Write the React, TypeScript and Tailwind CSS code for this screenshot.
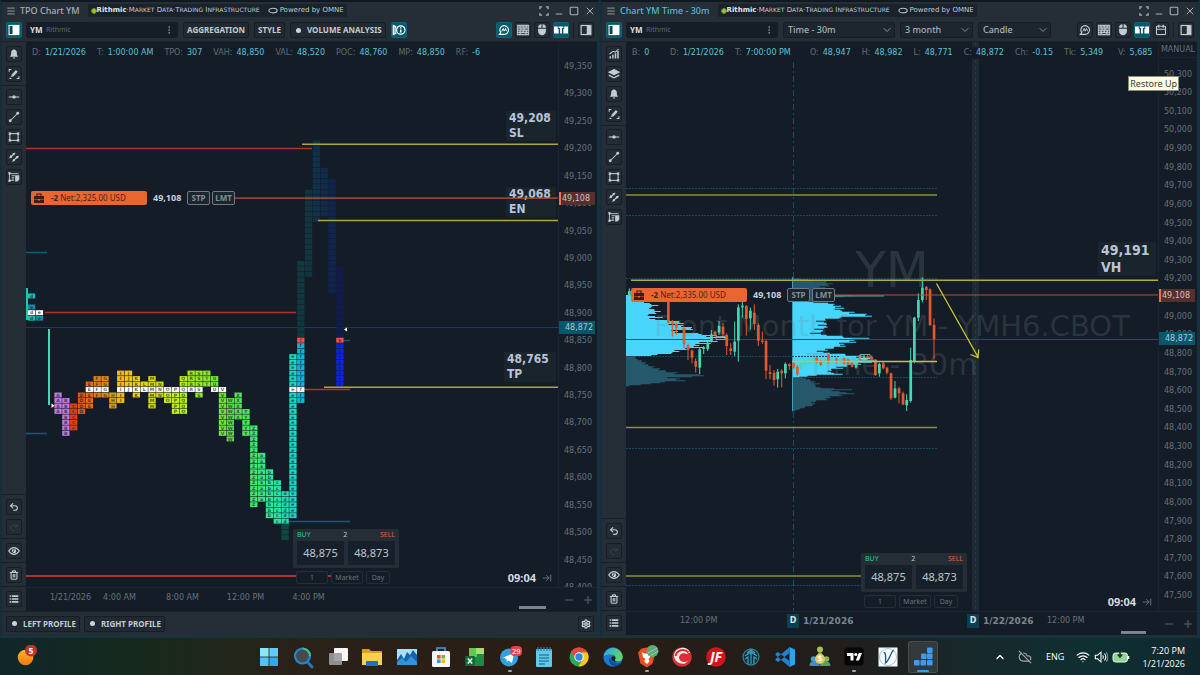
import React from "react";
import {
  ArrowRightToLine,
  ChevronDown,
  ChevronUp,
  CloudOff,
  List,
  Menu,
  Minus,
  MoreVertical,
  Plus,
  Redo2,
  Settings,
  Square,
  Trash2,
  Undo2,
  Wifi,
  X,
} from "lucide-react";

const SERIES_FONT = "font-['DejaVu_Sans',sans-serif]";

/* ---------- small icons ---------- */

type IconProps = { children: React.ReactNode; size?: string };

function Glyph({ children, size = "size-3" }: IconProps) {
  return (
    <svg viewBox="0 0 16 16" className={size} fill="none" stroke="currentColor" strokeWidth="1.4" aria-hidden="true">
      {children}
    </svg>
  );
}

const BellIcon = () => (
  <Glyph>
    <path d="M8 2c2.4 0 3.8 1.8 3.8 4.3 0 3 .6 4 1.7 5.2h-11c1.100-1.200 1.700-2.200 1.700-5.200C4.200 3.800 5.600 2 8 2z" fill="currentColor" stroke="none" />
    <path d="M6.300 12.500h3.400L8 14.500z" fill="currentColor" stroke="none" />
  </Glyph>
);
const PenIcon = () => (
  <Glyph>
    <path d="M4 12l1-3.500 5.500-6 2.500 2.500-5.500 6z" fill="currentColor" stroke="none" />
    <path d="M1.500 5V2h3M14.500 11v3h-3M2 13.800h2.500" />
  </Glyph>
);
const HLineIcon = () => (
  <Glyph>
    <path d="M1 8h14" />
    <circle cx="8" cy="8" r="2.300" fill="currentColor" stroke="none" />
  </Glyph>
);
const TrendIcon = () => (
  <Glyph>
    <path d="M3 13L13 3" />
    <circle cx="3" cy="13" r="1.900" fill="currentColor" stroke="none" />
    <circle cx="13" cy="3" r="1.900" fill="currentColor" stroke="none" />
  </Glyph>
);
const RectIcon = () => (
  <Glyph>
    <rect x="2.500" y="3.500" width="11" height="9" />
    {[[2.5, 3.5], [13.5, 3.5], [2.5, 12.5], [13.5, 12.5]].map(([x, y]) => (
      <rect key={`${x}-${y}`} x={x - 1.6} y={y - 1.6} width="3.200" height="3.200" fill="currentColor" stroke="none" />
    ))}
  </Glyph>
);
const ChannelIcon = () => (
  <Glyph>
    <path d="M2 9.500L9.500 2.500M6 14l8-7.500" strokeWidth="1.400" />
    <circle cx="4" cy="7.500" r="1.700" fill="currentColor" stroke="none" />
    <circle cx="7.500" cy="4.300" r="1.500" fill="currentColor" stroke="none" />
    <circle cx="12" cy="8.400" r="1.700" fill="currentColor" stroke="none" />
    <circle cx="8" cy="12" r="1.500" fill="currentColor" stroke="none" />
  </Glyph>
);
const NoteIcon = () => (
  <Glyph>
    <path d="M2 2v12M2 3.500h12M2 12.500h6" strokeWidth="1.200" />
    <rect x="0.500" y="1.500" width="3" height="3" fill="currentColor" stroke="none" />
    <rect x="0.500" y="11.500" width="3" height="3" fill="currentColor" stroke="none" />
    <path d="M5 6.200h4M5 8.400h3M5 10.500h3" strokeWidth="1.200" />
    <path d="M9.500 5.500h5.500v6l-2.500 2.500h-3z" fill="currentColor" stroke="none" />
  </Glyph>
);
const BarsIcon = () => (
  <Glyph>
    <path d="M3 14v-3M6.500 14V9M10 14V7M13.300 14V4" strokeWidth="2" />
    <path d="M2 8l5-3.500 3 1L14 1.500" />
  </Glyph>
);
const LayersIcon = () => (
  <Glyph>
    <path d="M8 2l7 3.500L8 9 1 5.500z" fill="currentColor" />
    <path d="M1 9.500L8 13l7-3.500" strokeWidth="1.800" />
  </Glyph>
);
const EyeIcon = () => (
  <Glyph>
    <path d="M1 8q3-4.500 7-4.500T15 8q-3 4.500-7 4.500T1 8z" strokeWidth="1.500" />
    <circle cx="8" cy="8" r="3" fill="currentColor" stroke="none" />
    <path d="M8 8V4.500M8 8l-2.500 2" stroke="#232b34" strokeWidth="1" />
  </Glyph>
);
const PanelLeftIcon = () => (
  <Glyph>
    <rect x="1.500" y="2" width="13" height="12" strokeWidth="1.600" />
    <rect x="6" y="2" width="8.500" height="12" fill="currentColor" stroke="none" />
    <rect x="2.300" y="2.800" width="3.200" height="10.400" fill="#064b5c" stroke="none" />
  </Glyph>
);
const PanelRightIcon = () => (
  <Glyph>
    <rect x="1.500" y="2" width="13" height="12" strokeWidth="1.600" />
    <rect x="9" y="2" width="5.500" height="12" fill="currentColor" stroke="none" />
  </Glyph>
);
const ChatIcon = () => (
  <Glyph>
    <path d="M3.600 11.500A5.800 5.800 0 1 1 8 13.800H1.800z" strokeWidth="1.500" />
    <path d="M4.800 10l2.200-4 1.200 3.500L10 6l1.400 3.500" strokeWidth="1.300" />
  </Glyph>
);
const KeyboardIcon = () => (
  <svg viewBox="0 0 16 16" className="size-3.5" fill="none" aria-hidden="true">
    <rect x="1" y="2" width="14" height="12" fill="#b8c0c8" />
    <path d="M2 4.500h2m1.500 0h2m1.500 0h2m1.500 0h1.500M2 7h3m1.500 0h2m1.500 0h4M2 9.500h2m1.500 0h2m1.500 0h2m1.500 0h1.500M2 12h2m1.500 0h5m1.500 0h2" stroke="#333c46" strokeWidth="1" />
  </svg>
);
const MouseIcon = () => (
  <Glyph size="size-3.5">
    <path d="M3.500 6.500h9V9a4.500 5 0 0 1-9 0z" fill="currentColor" stroke="none" />
    <path d="M3.500 5.500A4 4 0 0 1 7.400 1.500v4zM8.600 1.500a4 4 0 0 1 3.900 4H8.600z" fill="currentColor" stroke="none" />
  </Glyph>
);
const LinkBarIcon = () => (
  <svg viewBox="0 0 16 16" className="size-3.5" aria-hidden="true">
    <path d="M0 4h4.300v2.800h1V12H0zM11.700 4H16v8h-5.300V6.800h1z" fill="#fff" />
    <path d="M5.300 4h5.400v1.800H9V12H7V5.800H5.300z" fill="#fff" />
  </svg>
);
const CalendarIcon = () => (
  <Glyph>
    <rect x="2" y="3" width="12" height="11" rx="1" />
    <path d="M2 7h12M5 1v4M11 1v4" strokeWidth="1.600" />
  </Glyph>
);
const FlagInfoIcon = () => (
  <Glyph size="size-3.5">
    <path d="M1.500 2v12M2 3l3 1.500M2 13l3-1.500M3.500 4v8" />
    <circle cx="10" cy="8" r="4.800" />
    <path d="M10 7.300v3.500M10 4.800v1.400" strokeWidth="1.700" />
  </Glyph>
);
const ExpandIcon = () => (
  <Glyph size="size-2.5">
    <path d="M1.500 5V1.500H5M11 1.500h3.500V5M14.500 11v3.500H11M5 14.500H1.500V11" strokeWidth="2" />
  </Glyph>
);

/* ---------- controls ---------- */

function IconButton({ label, active, dim, children }: { label: string; active?: boolean; dim?: boolean; children: React.ReactNode }) {
  return (
    <button
      type="button"
      aria-label={label}
      className={`flex size-4 shrink-0 items-center justify-center rounded-[2px] border ${
        active ? "border-[#0b6678] bg-[#07596b] text-white" : "border-[#161d25] bg-[#232b34]"
      } ${dim ? "text-[#3b444e]" : active ? "" : "text-[#c3cbd3]"}`}
    >
      {children}
    </button>
  );
}

function TextButton({ children, dot }: { children: string; dot?: boolean }) {
  return (
    <button
      type="button"
      className="flex h-4 shrink-0 items-center whitespace-nowrap rounded-[2px] border border-[#161d25] bg-[#212932] px-[3px] text-[8px] font-bold text-[#c3cbd3]"
    >
      {dot && <span className="mr-1.5 ml-0.5 size-[5px] rounded-full bg-[#cdd5dc]" />}
      {children}
    </button>
  );
}

function Picker({ label, value, width }: { label: string; value: string; width: string }) {
  return (
    <div className={`relative flex h-4 ${width}`}>
      <select
        aria-label={label}
        defaultValue={value}
        className="block h-4 w-full appearance-none rounded-[2px] border border-[#161d25] bg-[#1d252e] px-1 py-0 text-[9px] leading-[14px] font-medium text-[#aab3bb]"
      >
        <option>{value}</option>
      </select>
      <ChevronDown className="pointer-events-none absolute top-0.5 right-0.5 size-3 text-[#8b949d]" />
    </div>
  );
}

const Divider = () => <span className="mt-[3px] mb-1 block h-px w-full bg-[#171e26]" />;

function TitleBar({ title, active }: { title: string; active?: boolean }) {
  return (
    <header className="flex h-[17px] items-center bg-[#252d37] pr-px pl-1 text-[#a6afb8]">
      <button type="button" aria-label="Window menu"><Menu className="size-2.5" /></button>
      <h2 className={`ml-1 text-[9px] font-medium whitespace-nowrap ${active ? "text-[#55bcd2]" : "text-[#a6afb8]"}`}>{title}</h2>
      <div className={`ml-2 flex h-[13px] items-center whitespace-nowrap rounded-[2px] bg-[#1a222b] px-[3px] text-[7px] text-[#c3cad1] ${SERIES_FONT}`}>
        <svg viewBox="0 0 8 8" className="size-[6px]" aria-hidden="true">
          <rect x="1" y="1" width="6" height="6" fill="#6b9c16" />
          <path d="M4 0v8M0 4h8" stroke="#b7dc3a" strokeWidth="1.200" />
        </svg>
        <span className="font-bold text-[#e1e6ea]">Rithmic</span>
        <span>·M<span className="text-[6px]">ARKET</span> D<span className="text-[6px]">ATA</span>·T<span className="text-[6px]">RADING</span> I<span className="text-[6px]">NFRASTRUCTURE</span></span>
        <svg viewBox="0 0 12 8" className="ml-2 h-[7px] w-[10px]" fill="none" stroke="#b9c1c9" strokeWidth="1.300" aria-hidden="true">
          <ellipse cx="6" cy="4" rx="5" ry="2.800" />
        </svg>
        <span className="ml-0.5">Powered by OMNE</span>
      </div>
      <div className="ml-auto flex items-center gap-[5px]">
        <button type="button" aria-label="Full screen"><ExpandIcon /></button>
        <button type="button" aria-label="Minimize" className="pt-1.5"><Minus className="size-2.5" strokeWidth={2.6} /></button>
        <button type="button" aria-label="Maximize"><Square className="size-2.5" strokeWidth={2.6} /></button>
        <button type="button" aria-label="Close"><X className="size-3" /></button>
      </div>
    </header>
  );
}

function SymbolBox() {
  return (
    <div className="ml-1 flex h-4 w-[152px] shrink-0 items-center rounded-[2px] bg-[#151d26] px-1">
      <input aria-label="Symbol" defaultValue="YM" className="h-3 w-4 bg-transparent text-[8px] leading-[12px] font-bold text-[#dce2e7] outline-none" />
      <span className="text-[7px] leading-[12px] text-[#5e6973]">Rithmic</span>
      <button type="button" aria-label="Symbol options" className="ml-auto text-[#8b949d]"><MoreVertical className="size-2.5" /></button>
    </div>
  );
}

function ToolbarRight({ calendar, chatActive }: { calendar?: boolean; chatActive?: boolean }) {
  return (
    <div className="ml-auto flex items-center gap-[3px]">
      <IconButton label="Data window" active={chatActive}><ChatIcon /></IconButton>
      <IconButton label="Keyboard trading"><KeyboardIcon /></IconButton>
      <IconButton label="Mouse trading"><MouseIcon /></IconButton>
      <IconButton label="Trading bar" active><LinkBarIcon /></IconButton>
      {calendar && <IconButton label="Sessions"><CalendarIcon /></IconButton>}
      <span className="mx-px h-4 w-px bg-[#171e26]" />
      <IconButton label="Right panel"><PanelRightIcon /></IconButton>
    </div>
  );
}

function DrawingTools({ extended }: { extended?: boolean }) {
  return (
    <nav aria-label="Drawing tools" className="flex w-6 shrink-0 flex-col items-center bg-[#252d36] pt-1 pb-1">
      <div className="flex flex-col gap-1">
        {extended && (
          <>
            <IconButton label="Indicators"><BarsIcon /></IconButton>
            <IconButton label="Overlays"><LayersIcon /></IconButton>
          </>
        )}
        <IconButton label="Alerts"><BellIcon /></IconButton>
        <IconButton label="Draw"><PenIcon /></IconButton>
      </div>
      <span className="my-[3px] block h-px w-full bg-[#171e26]" />
      <div className="flex flex-col gap-1">
        <IconButton label="Horizontal line"><HLineIcon /></IconButton>
        <IconButton label="Trend line"><TrendIcon /></IconButton>
        <IconButton label="Rectangle"><RectIcon /></IconButton>
        <IconButton label="Channel"><ChannelIcon /></IconButton>
        <IconButton label="Note"><NoteIcon /></IconButton>
      </div>
      <div className="mt-auto w-full"><Divider /></div>
      <div className="flex flex-col gap-1">
        <IconButton label="Undo"><Undo2 className="size-2.5" strokeWidth={2.6} /></IconButton>
        <IconButton label="Redo" dim><Redo2 className="size-2.5" /></IconButton>
      </div>
      <Divider />
      <IconButton label="Show drawings"><EyeIcon /></IconButton>
      <Divider />
      <IconButton label="Delete drawings"><Trash2 className="size-2.5" strokeWidth={2.6} /></IconButton>
      <Divider />
      <IconButton label="Object list"><List className="size-2.5" strokeWidth={4} /></IconButton>
    </nav>
  );
}

/* ---------- chart overlays ---------- */

type Stat = { k: string; v: string; w?: string };

function StatRow({ stats }: { stats: Stat[] }) {
  return (
    <dl className={`absolute top-[5px] left-1.5 flex gap-[11px] whitespace-nowrap bg-[#141d27] text-[8px] leading-[12px] ${SERIES_FONT}`}>
      {stats.map((s) => (
        <div key={s.k} className={`flex gap-1 ${s.w ?? ""}`}>
          <dt className="text-[#626c76]">{s.k}:</dt>
          <dd className="text-[#5bc0d6]">{s.v}</dd>
        </div>
      ))}
    </dl>
  );
}

function PositionTag({ net, className }: { net: string; className: string }) {
  return (
    <div className={`absolute left-[5px] flex h-[14px] items-center ${className}`}>
      <div className="flex h-[14px] w-[116px] items-center rounded-[2px] bg-[#ea6631] px-0.5 text-[8px] whitespace-nowrap text-[#4a2417]">
        <svg viewBox="0 0 12 12" className="mr-1.5 size-3" aria-hidden="true">
          <path d="M4 4V2h4v2" fill="none" stroke="#3a1d14" strokeWidth="1.200" />
          <path d="M1 4h10v3H1zM1 7.600h4v1h2v-1h4V11H1z" fill="#3a1d14" />
        </svg>
        <b>-2</b>&nbsp;<span>Net:{net} USD</span>
      </div>
      <span className="w-[40px] bg-[#141d27] pl-1.5 text-[9px] leading-[14px] font-bold text-[#c6cfdb]">49,108</span>
      {["STP", "LMT"].map((t) => (
        <button key={t} type="button" className="mr-0.5 h-[14px] w-[23px] rounded-[2px] border border-[#707a84] bg-[#1c252e] text-center text-[8px] leading-[12px] font-bold text-[#848d96]">
          {t}
        </button>
      ))}
    </div>
  );
}

function OrderPanel({ className }: { className: string }) {
  return (
    <div className={`absolute ${className}`}>
      <div className="w-[106px] rounded-[2px] bg-[#252d36] px-1 pt-px pb-[3px]">
        <div className="flex justify-between text-[7px] leading-[10px]">
          <span className="text-[#2fc7a1]">BUY</span>
          <span className="text-[#c3cbd3]">2</span>
          <span className="text-[#e0603a]">SELL</span>
        </div>
        <div className="mt-px flex gap-1">
          <button type="button" className="h-6 flex-1 bg-[#17202a] text-[11px] leading-[22px] text-[#bcc5d0]">48,875</button>
          <button type="button" className="h-6 flex-1 bg-[#17202a] text-[11px] leading-[22px] text-[#bcc5d0]">48,873</button>
        </div>
      </div>
      <div className="mt-[3px] flex gap-[3px] pl-[3px] text-[7px] text-[#69737d]">
        <button type="button" className="h-[13px] w-8 rounded-[2px] border border-[#242d37] bg-[#141d27] leading-[11px]">1</button>
        <button type="button" className="h-[13px] w-8 rounded-[2px] border border-[#242d37] bg-[#141d27] leading-[11px]">Market</button>
        <button type="button" className="h-[13px] w-6 rounded-[2px] border border-[#242d37] bg-[#141d27] leading-[11px]">Day</button>
      </div>
    </div>
  );
}

const Countdown = () => (
  <div className="absolute right-1.5 bottom-0.5 flex items-center gap-1.5 text-[11px] leading-[14px] font-bold text-[#d3dae0]">
    09:04 <ArrowRightToLine className="size-2.5 text-[#737d87]" />
  </div>
);

function LevelTag({ price, name, className }: { price: string; name: string; className: string }) {
  return (
    <div className={`absolute right-0.5 bg-[#1a242d] pr-1 pl-[3px] font-['DejaVu_Sans_Condensed','DejaVu_Sans',sans-serif] font-bold text-[#b9c5d6] ${className}`}>
      <div>{price}</div>
      <div>{name}</div>
    </div>
  );
}

type Scale = (price: number) => number;

function PriceAxis({ from, to, step, scale, manual }: { from: number; to: number; step: number; scale: Scale; manual?: boolean }) {
  const ticks: number[] = [];
  for (let p = from; p >= to; p -= step) ticks.push(p);
  return (
    <div className={`relative w-[39px] shrink-0 overflow-hidden border-l border-[#1b242e] ${SERIES_FONT}`}>
      <svg className="absolute inset-0 size-full" aria-label="Price axis">
        <g transform="translate(0,-42)">
          {ticks.map((p) => (
            <text key={p} x="19" y={Math.round(scale(p)) + 3} textAnchor="middle" fontSize="8" fill="#67717b">
              {p.toLocaleString("en-US")}
            </text>
          ))}
        </g>
      </svg>
      {manual && (
        <button type="button" className="absolute inset-x-0 top-0 h-4 border-b border-[#1b242e] text-[8px] text-[#67717b]">MANUAL</button>
      )}
      <span
        className="absolute right-0.5 left-0 h-[13px] border-l-2 border-[#ee7048] bg-[#57302d] pl-px text-[8px] leading-[13px] text-[#c9c3c4]"
        style={{ top: Math.round(scale(49108)) - 49 }}
      >
        49,108
      </span>
      <span
        className="absolute right-0.5 left-0 h-[13px] bg-[#07576a] pl-1.5 text-[8px] leading-[13px] text-[#a9c9d6]"
        style={{ top: Math.round(scale(48872)) - 49 }}
      >
        48,872
      </span>
    </div>
  );
}

const ZoomControls = () => (
  <div className="flex w-[39px] shrink-0 items-center justify-around pl-0.5 text-[#59636d]">
    <button type="button" aria-label="Zoom out"><Minus className="size-3" strokeWidth={2} /></button>
    <button type="button" aria-label="Zoom in"><Plus className="size-3" strokeWidth={2} /></button>
  </div>
);

/* ---------- TPO profile ---------- */

const tpoScale: Scale = (p) => 66 + (49350 - p) * 0.5484;
const ROW = 5.484;

type Column = { l: string; top: number; bottom: number; c: string; dark?: [number, number, string] };

const COLUMNS: Column[] = [
  { l: "A", top: -1, bottom: -4, c: "#c07ae0" },
  { l: "B", top: -2, bottom: -8, c: "#b87ae4" },
  { l: "C", top: -3, bottom: -7, c: "#e23f12" },
  { l: "D", top: -1, bottom: -4, c: "#e5561a" },
  { l: "E", top: 1, bottom: -3, c: "#e26a1a" },
  { l: "F", top: 2, bottom: -1, c: "#e37d18" },
  { l: "G", top: 2, bottom: -1, c: "#e58a18" },
  { l: "H", top: -1, bottom: -3, c: "#e8a01a" },
  { l: "I", top: 3, bottom: -2, c: "#efb91a" },
  { l: "J", top: 3, bottom: 0, c: "#efc61a" },
  { l: "K", top: 2, bottom: -1, c: "#ecce1c" },
  { l: "L", top: 1, bottom: 0, c: "#e6d81c" },
  { l: "M", top: 2, bottom: -3, c: "#dfe01c" },
  { l: "N", top: 1, bottom: -1, c: "#d4e41c" },
  { l: "O", top: 0, bottom: -2, c: "#cdf01c" },
  { l: "P", top: 0, bottom: -4, c: "#c4f01c" },
  { l: "Q", top: 2, bottom: -4, c: "#bcf21e" },
  { l: "R", top: 3, bottom: 0, c: "#a8ec22" },
  { l: "S", top: 3, bottom: -1, c: "#98e826" },
  { l: "T", top: 3, bottom: 1, c: "#8ce62c" },
  { l: "U", top: 2, bottom: 0, c: "#7ce634" },
  { l: "V", top: 0, bottom: -8, c: "#6ee63a" },
  { l: "W", top: -2, bottom: -9, c: "#60e444" },
  { l: "X", top: -1, bottom: -5, c: "#56e650" },
  { l: "Y", top: -4, bottom: -8, c: "#4ce85c" },
  { l: "Z", top: -7, bottom: -21, c: "#42ea6c" },
  { l: "a", top: -12, bottom: -20, c: "#36e87c" },
  { l: "b", top: -15, bottom: -23, c: "#2eea92" },
  { l: "c", top: -17, bottom: -24, c: "#26e8a2" },
  { l: "d", top: -19, bottom: -24, c: "#20e4b2", dark: [-25, -27, "#114640"] },
  { l: "e", top: 6, bottom: -23, c: "#1bd8c4" },
  { l: "f", top: 9, bottom: -2, c: "#14b4d4", dark: [23, 10, "#12383f"] },
  { l: "g", top: 0, bottom: 1, c: "", dark: [36, 21, "#12343f"] },
  { l: "h", top: 0, bottom: 1, c: "", dark: [45, 31, "#11304a"] },
  { l: "i", top: 0, bottom: 1, c: "", dark: [40, 32, "#112c4a"] },
  { l: "j", top: 0, bottom: 1, c: "", dark: [38, 18, "#11244c"] },
  { l: "k", top: 9, bottom: 1, c: "#0c22ee", dark: [22, 10, "#121c4c"] },
];

function Cell({ x, y, fill, letter }: { x: number; y: number; fill: string; letter?: string }) {
  return (
    <g>
      <rect x={x - 3.6} y={y - 2.5} width="7.300" height="4.900" fill={fill} />
      {letter && (
        <text x={x} y={y + 1.7} textAnchor="middle" fontSize="4.500" fontWeight="bold" fill="#10202a" opacity="0.700">
          {letter}
        </text>
      )}
    </g>
  );
}

function TpoColumns() {
  const poc = tpoScale(48760);
  return (
    <>
      {COLUMNS.map((col, i) => {
        const x = 58 + i * 7.83;
        const cells: React.ReactNode[] = [];
        for (let r = col.top; r >= col.bottom; r--) {
          const fill = r === 0 ? "#ffffff" : r === 9 ? "#f0554f" : col.c;
          cells.push(<Cell key={r} x={x} y={poc - r * ROW} fill={fill} letter={col.l} />);
        }
        if (col.dark) {
          for (let r = col.dark[0]; r >= col.dark[1]; r--) cells.push(<Cell key={`d${r}`} x={x} y={poc - r * ROW} fill={col.dark[2]} />);
        }
        return <g key={col.l}>{cells}</g>;
      })}
    </>
  );
}

const FAR = 4000;

function TpoChart() {
  return (
    <svg className="absolute inset-0 size-full" aria-label="TPO profile">
      <g transform="translate(-26,-42)" className={SERIES_FONT}>
        <path d={`M26 327.500H${FAR}`} stroke="#0c4656" />
        <path d="M26 148.500H312M45 312.500H296M303 389.500H350" stroke="#b3302b" strokeWidth="1.400" />
        <path d="M26 576H332" stroke="#b3302b" strokeWidth="1.800" />
        <path d="M26 252.500H47M26 433.500H47M288 521.500H350M344 340.500H350" stroke="#0d5e70" strokeWidth="1.300" />
        <path d="M27 288v32" stroke="#18c9b5" strokeWidth="2" />
        <Cell x={31.500} y={296} fill="#12c6b2" letter="d" />
        <Cell x={31.500} y={307} fill="#128fa0" letter="e" />
        <Cell x={31.500} y={312.700} fill="#ffffff" letter="d" />
        <Cell x={39.400} y={312.700} fill="#ffffff" letter="e" />
        <Cell x={31.500} y={318.200} fill="#12c6b2" letter="d" />
        <Cell x={39.400} y={318.200} fill="#128fa0" letter="e" />
        <path d="M49 329v76" stroke="#3fdcb8" strokeWidth="2" />
        <TpoColumns />
        <path d="M51.500 403.500l3 2.200-3 2.200z" fill="#fff" />
        <path d="M344 329.500l3-2v4z" fill="#fff" />
        <path d={`M302 144.200H${FAR}M318 220.500H${FAR}M324 387.200H${FAR}`} stroke="#aea63a" strokeWidth="1.400" />
        <path d={`M234 198.200H${FAR}`} stroke="#bf5038" strokeWidth="1.200" />
      </g>
    </svg>
  );
}

/* ---------- time chart ---------- */

const timeScale: Scale = (p) => 73.5 + (50300 - p) * 0.18625;

/* [y, length] samples, three units per pixel */
type Sample = [number, number];

const LEFT_VALUE: Sample[] = [[225, 17], [240, 37], [247, 67], [257, 102], [260, 72], [268, 90], [275, 107], [285, 67], [290, 117], [296, 67], [300, 152], [307, 182], [312, 152], [318, 192], [325, 220], [330, 162], [335, 152], [340, 242], [345, 267], [350, 300], [356, 302], [362, 272], [370, 252], [376, 222], [382, 232], [388, 172], [395, 162], [402, 112], [407, 52]];
const LEFT_TAIL: Sample[] = [[409, 30], [415, 32], [425, 57], [435, 72], [445, 102], [455, 137], [460, 172], [466, 272], [472, 137], [480, 192], [485, 122], [490, 82], [495, 17], [498, 2]];
const RIGHT_HEAD: Sample[] = [[172, 4], [180, 64], [186, 121], [195, 124], [200, 84], [206, 124], [212, 114], [220, 124], [228, 204], [233, 100], [243, 70]];
const RIGHT_VALUE: Sample[] = [[245, 64], [247, 124], [255, 139], [262, 159], [268, 144], [275, 184], [281, 224], [286, 275], [290, 164], [295, 124], [302, 84], [308, 114], [315, 89], [320, 124], [326, 74], [332, 109], [338, 64], [345, 124], [350, 184], [353, 232], [358, 194], [365, 189], [370, 154], [376, 174], [382, 124], [388, 114], [393, 79], [400, 144], [405, 204], [410, 224], [415, 254], [420, 249], [425, 239], [430, 224], [436, 164], [443, 154], [448, 124], [455, 114], [460, 174], [465, 64], [470, 24]];
const RIGHT_TAIL: Sample[] = [[472, 30], [475, 49], [482, 64], [490, 84], [497, 74], [502, 84], [507, 194], [512, 124], [518, 194], [524, 164], [530, 124], [538, 104], [545, 64], [552, 74], [560, 44], [568, 19], [574, 2]];

/* alternate rows are shortened a little so the profile reads as separate price bars */
const ROW_FACTOR = [1, 0.86, 0.97, 0.9, 1.02, 0.84];

function profilePath(samples: Sample[], x: number): string {
  const first = samples[0][0];
  const last = samples[samples.length - 1][0];
  let d = `M${x} ${220 + first / 3}`;
  let n = 0;
  for (let y = first; y <= last; y += 3) {
    let k = 0;
    while (k < samples.length - 2 && samples[k + 1][0] < y) k++;
    const [y0, w0] = samples[k];
    const [y1, w1] = samples[k + 1];
    const t = Math.min(1, Math.max(0, (y - y0) / (y1 - y0)));
    const w = ((w0 + (w1 - w0) * t) / 3) * ROW_FACTOR[n++ % ROW_FACTOR.length];
    d += `H${(x + w).toFixed(1)}V${(220 + (y + 3) / 3).toFixed(1)}`;
  }
  return `${d}H${x}z`;
}

/* [x, body top, body bottom, wick top, wick bottom, rising] */
type Candle = [number, number, number, number, number, 0 | 1];

const CANDLES: Candle[] = [
  [88, 213, 230, 205, 230, 1], [205, 245, 308, 245, 310, 0], [217, 305, 310, 300, 350, 0], [229, 312, 325, 308, 345, 0],
  [252, 325, 373, 322, 385, 0], [264, 375, 390, 370, 420, 0], [276, 392, 413, 388, 430, 0], [287, 423, 440, 415, 458, 0],
  [299, 388, 443, 383, 462, 1], [311, 382, 387, 378, 402, 1], [323, 368, 387, 365, 393, 1], [334, 343, 365, 330, 368, 1],
  [345, 335, 345, 332, 350, 0], [357, 318, 338, 303, 345, 1], [369, 320, 342, 308, 350, 0], [380, 345, 378, 340, 405, 0],
  [392, 385, 393, 370, 405, 0], [404, 365, 395, 305, 408, 1], [415, 262, 362, 253, 425, 1], [427, 257, 262, 245, 293, 1],
  [439, 258, 297, 255, 347, 0], [451, 272, 295, 263, 328, 1], [463, 278, 312, 253, 330, 0], [475, 315, 362, 310, 378, 0],
  [487, 362, 366, 335, 372, 0], [498, 363, 452, 360, 478, 0], [510, 457, 462, 435, 478, 0], [522, 458, 480, 450, 497, 0],
  [533, 455, 478, 447, 503, 1], [545, 452, 460, 448, 502, 0], [556, 432, 460, 427, 475, 1], [568, 433, 438, 430, 450, 0],
  [581, 430, 443, 425, 447, 0], [592, 440, 463, 435, 468, 0], [604, 430, 442, 425, 450, 1], [615, 424, 432, 420, 436, 1],
  [627, 422, 430, 416, 434, 1], [639, 420, 427, 414, 430, 1], [650, 413, 427, 411, 430, 0], [662, 425, 435, 420, 438, 0],
  [674, 420, 427, 416, 430, 1], [685, 405, 427, 402, 430, 0], [697, 415, 428, 412, 430, 1], [709, 416, 426, 412, 430, 0],
  [720, 418, 427, 414, 430, 1], [732, 415, 430, 413, 435, 0], [744, 418, 432, 416, 436, 0], [756, 428, 440, 424, 443, 0],
  [768, 425, 443, 421, 446, 1], [780, 410, 420, 404, 428, 0], [792, 409, 418, 403, 424, 1], [803, 408, 415, 403, 420, 0],
  [815, 410, 418, 406, 422, 0], [826, 422, 465, 418, 468, 0], [838, 432, 460, 428, 470, 1], [850, 430, 445, 425, 448, 0],
  [861, 443, 458, 440, 463, 0], [873, 460, 535, 458, 540, 0], [885, 505, 533, 483, 535, 1], [897, 505, 520, 500, 550, 0],
  [909, 520, 553, 515, 556, 0], [920, 540, 556, 523, 573, 1], [932, 420, 543, 383, 548, 1], [943, 293, 425, 290, 430, 1],
  [955, 240, 293, 220, 303, 1], [967, 203, 240, 172, 247, 1], [979, 201, 210, 198, 240, 0], [990, 208, 315, 205, 318, 0],
  [1002, 315, 357, 295, 418, 0],
];

function TimeChart() {
  return (
    <svg className="absolute inset-0 size-full" aria-label="Price by time">
      <g transform="translate(-626,-42)" fill="none">
        <rect x="972" y="42" width="7" height="570" fill="#1d2a32" />
        <path d="M975.500 42V612" stroke="#263c41" strokeDasharray="3 3" />
        <path d="M793.500 62V612" stroke="#0d5263" strokeDasharray="6 3 2 3" />
        <path d="M626 188.500H937M626 215.500H937M626 278.500H937M626 356.500H850M792 377.500H937M626 448.500H937M626 585.500H861" stroke="#164a59" strokeDasharray="2 1" />
        <path d={profilePath(LEFT_VALUE, 626)} fill="#47d5fb" />
        <path d={profilePath(LEFT_TAIL, 626)} fill="#26586b" />
        <path d={profilePath(RIGHT_HEAD, 792)} fill="#26586b" />
        <path d={profilePath(RIGHT_VALUE, 792)} fill="#47d5fb" />
        <path d={profilePath(RIGHT_TAIL, 792)} fill="#26586b" />
        <path d="M792.500 277V411" stroke="#3f9fb8" />
        <path d="M792 356.500H840" stroke="#12495a" strokeDasharray="2 1" />
      </g>
      <g fill="#7b8791" fillOpacity="0.220" textAnchor="middle" className={SERIES_FONT}>
        <text x="50%" y="245" fontSize="50">YM</text>
        <text x="50%" y="294" fontSize="29">Front Month for YM - YMH6.CBOT</text>
        <text x="50%" y="333" fontSize="30">Time - 30m</text>
      </g>
      <g transform="translate(-626,-42)" fill="none">
        <path d={`M626 339.500H${FAR}`} stroke="#0f5969" />
        {CANDLES.map(([x, bt, bb, wt, wb, up]) => {
          const px = 600 + x / 3;
          const fill = up ? "#40d9b4" : "#e2592f";
          return (
            <g key={x} fill={fill}>
              <rect x={px - 0.5} y={220 + wt / 3} width="1" height={(wb - wt) / 3} />
              <rect x={px - 1.3} y={220 + bt / 3} width="2.700" height={Math.max(1, (bb - bt) / 3)} />
            </g>
          );
        })}
        <path d="M860 354.500h10v4h-10zM716 336.500h9v3h-9z" stroke="#9fd8dd" strokeWidth="0.700" />
        <path d="M626 195H937M626 427.500H937M626 576H861" stroke="#8c8f32" strokeWidth="1.600" />
        <path d="M792 361.500H937" stroke="#c6c241" strokeWidth="1.300" />
        <path d={`M631 280.200H${FAR}`} stroke="#aead39" strokeWidth="1.400" />
        <path d={`M835 295H${FAR}`} stroke="#b94f37" />
        <path d="M835 296H884" stroke="#40b890" />
        <path d="M936.500 283.500L978 357M970.500 354.500l7.500 3 .7-8" stroke="#cfca2f" strokeWidth="1.300" />
      </g>
    </svg>
  );
}

/* ---------- windows ---------- */

const FRAME = "flex min-w-0 flex-col border-t-2 border-r-[3px] border-b-[3px] border-l-2 border-t-[#101820] border-r-[#15323f] border-b-[#1b323d] border-l-[#1a2c38] bg-[#141d27]";

function TpoWindow() {
  return (
    <section className={FRAME}>
      <TitleBar title="TPO Chart YM" />
      <div className="flex h-[23px] items-center border-b border-[#1a222b] bg-[#252d37] pr-[3px] pl-1">
        <IconButton label="Left panel" active><PanelLeftIcon /></IconButton>
        <SymbolBox />
        <div className="ml-[5px] flex gap-[5px]">
          <TextButton>AGGREGATION</TextButton>
          <TextButton>STYLE</TextButton>
          <TextButton dot>VOLUME ANALYSIS</TextButton>
          <IconButton label="Profile info" active><FlagInfoIcon /></IconButton>
        </div>
        <ToolbarRight chatActive />
      </div>
      <div className="flex flex-1">
        <DrawingTools />
        <div className="flex min-w-0 flex-1 flex-col">
          <div className="flex flex-1">
            <div className="relative flex-1 overflow-hidden">
              <LevelTag price="49,208" name="SL" className="top-[69px] w-[50px] text-[12px] leading-[15px]" />
              <LevelTag price="49,068" name="EN" className="top-[145px] w-[50px] text-[12px] leading-[15px]" />
              <LevelTag price="48,765" name="TP" className="top-[310px] w-[52px] text-[12px] leading-[15px]" />
              <TpoChart />
              <StatRow
                stats={[
                  { k: "D", v: "1/21/2026" },
                  { k: "T", v: "1:00:00 AM" },
                  { k: "TPO", v: "307" },
                  { k: "VAH", v: "48,850" },
                  { k: "VAL", v: "48,520" },
                  { k: "POC", v: "48,760" },
                  { k: "MP", v: "48,850" },
                  { k: "RF", v: "-6" },
                ]}
              />
              <PositionTag net="2,325.00" className="top-[149px]" />
              <OrderPanel className="top-[487px] left-[267px]" />
              <Countdown />
            </div>
            <PriceAxis from={49350} to={48400} step={50} scale={tpoScale} />
          </div>
          <div className={`flex h-6 border-t border-[#1d2630] ${SERIES_FONT}`}>
            <div className="relative flex flex-1 items-center overflow-hidden pb-1 pl-6 text-[8px] leading-[12px] whitespace-nowrap text-[#67717b]">
              <span className="w-[38px]">1/21/2026</span>
              {["4:00 AM", "8:00 AM", "12:00 PM", "4:00 PM"].map((t) => (
                <span key={t} className="w-[63px] text-center">{t}</span>
              ))}
              <span className="absolute right-3 bottom-0.5 h-[3px] w-[27px] bg-[#7b858e]" />
            </div>
            <ZoomControls />
          </div>
        </div>
      </div>
      <footer className="flex h-6 items-center gap-1 border-t border-[#1a222b] bg-[#252d37] pr-[3px] pl-1">
        <TextButton dot>LEFT PROFILE</TextButton>
        <TextButton dot>RIGHT PROFILE</TextButton>
        <div className="ml-auto"><IconButton label="Settings"><Settings className="size-2.5" strokeWidth={3.4} /></IconButton></div>
      </footer>
    </section>
  );
}

function DayMark({ date }: { date: string }) {
  return (
    <span className="flex items-center gap-1 text-[9px] font-bold text-[#7b858e]">
      <span className="h-[14px] w-3 bg-[#0c4050] text-center text-[8px] leading-[14px] text-[#dce2e7]">D</span>
      {date}
    </span>
  );
}

function TimeWindow() {
  return (
    <section className={FRAME}>
      <TitleBar title="Chart YM Time - 30m" active />
      <div className="flex h-[23px] items-center border-b border-[#1a222b] bg-[#252d37] pr-[3px] pl-1">
        <IconButton label="Left panel" active><PanelLeftIcon /></IconButton>
        <SymbolBox />
        <div className="ml-[5px] flex gap-[5px]">
          <Picker label="Aggregation" value="Time - 30m" width="w-[112px]" />
          <Picker label="Range" value="3 month" width="w-[73px]" />
          <Picker label="Chart style" value="Candle" width="w-[73px]" />
        </div>
        <ToolbarRight calendar />
      </div>
      <div className="flex flex-1">
        <DrawingTools extended />
        <div className="relative flex min-w-0 flex-1 flex-col">
          <div className="flex flex-1">
            <div className="relative flex-1 overflow-hidden">
              <LevelTag price="49,191" name="VH" className="top-[200px] w-[58px] text-[14px] leading-[17px]" />
              <TimeChart />
              <StatRow
                stats={[
                  { k: "B", v: "0", w: "min-w-[27px]" },
                  { k: "D", v: "1/21/2026" },
                  { k: "T", v: "7:00:00 PM", w: "min-w-[64px]" },
                  { k: "O", v: "48,947" },
                  { k: "H", v: "48,982" },
                  { k: "L", v: "48,771" },
                  { k: "C", v: "48,872" },
                  { k: "Ch", v: "-0.15" },
                  { k: "Tk", v: "5,349", w: "min-w-[43px]" },
                  { k: "V", v: "5,685" },
                ]}
              />
              <PositionTag net="2,335.00" className="top-[246px]" />
              <OrderPanel className="top-[511px] left-[235px]" />
              <Countdown />
            </div>
            <PriceAxis from={50300} to={47500} step={100} scale={timeScale} manual />
          </div>
          <div className={`flex h-6 border-t border-[#1d2630] ${SERIES_FONT}`}>
            <div className="relative flex flex-1 items-start overflow-hidden pt-0.5 pl-[54px] text-[8px] leading-[14px] whitespace-nowrap text-[#67717b]">
              <span className="w-[107px]">12:00 PM</span>
              <span className="w-[180px]"><DayMark date="1/21/2026" /></span>
              <span className="w-[80px]"><DayMark date="1/22/2026" /></span>
              <span>12:00 PM</span>
              <span className="absolute right-3 bottom-px h-[3px] w-[25px] bg-[#7b858e]" />
            </div>
            <ZoomControls />
          </div>
          <div role="tooltip" className="absolute top-[34px] right-[18px] border border-[#8b8b80] bg-[#fdfde4] px-px text-[9px] leading-[13px] text-[#3b3b3b]">
            Restore Up
          </div>
        </div>
      </div>
    </section>
  );
}

/* ---------- taskbar ---------- */

function App24({ label, children, running, active }: { label: string; children: React.ReactNode; running?: boolean; active?: boolean }) {
  return (
    <button type="button" aria-label={label} className="relative flex size-6 items-center justify-center">
      {active && <span className="absolute -inset-x-[3px] -inset-y-1 rounded-[3px] border border-white/10 bg-white/10" />}
      <svg viewBox="0 0 24 24" className="relative size-6" aria-hidden="true">{children}</svg>
      {running && <span className="absolute -bottom-[3px] left-1/2 h-0.5 w-1 -translate-x-1/2 rounded-full bg-[#a5a5a5]" />}
      {active && <span className="absolute -bottom-[3px] left-1/2 h-0.5 w-3 -translate-x-1/2 rounded-full bg-[#3a9cf0]" />}
    </button>
  );
}

function Taskbar() {
  return (
    <footer className="flex h-[37px] shrink-0 items-center bg-[linear-gradient(90deg,#10262a_0%,#162a1c_12%,#2a2119_25%,#281d15_50%,#211d1b_70%,#18272a_80%,#0e3033_92%,#10262d_100%)] text-white">
      <div className="w-[257px] shrink-0 pl-[14px]">
        <App24 label="Widgets, 5 new">
          <defs><linearGradient id="sun" x1="0" y1="0" x2="0" y2="1"><stop offset="0" stopColor="#ffb128" /><stop offset="1" stopColor="#f27a12" /></linearGradient></defs>
          <circle cx="11.500" cy="12.500" r="7.800" fill="url(#sun)" />
          <circle cx="17" cy="5.500" r="6" fill="#c7302b" />
          <text x="17" y="8.500" textAnchor="middle" fontSize="8.500" fontWeight="bold" fill="#fff">5</text>
        </App24>
      </div>
      <div className="flex w-[678px] shrink-0 justify-between">
        <App24 label="Start">
          <path d="M3 3h8.600v8.600H3z" fill="#8fe3fc" /><path d="M12.400 3H21v8.600h-8.600z" fill="#5ecdf9" /><path d="M3 12.400h8.600V21H3z" fill="#50c4f7" /><path d="M12.400 12.400H21V21h-8.600z" fill="#2fa9f2" />
        </App24>
        <App24 label="Search">
          <path d="M16.500 17l4.500 5" stroke="#2673b8" strokeWidth="3" strokeLinecap="round" />
          <circle cx="11.500" cy="11" r="7.500" fill="#454b4c" stroke="#2586cf" strokeWidth="2.200" />
          <path d="M11.500 3.500a7.500 7.500 0 0 1 7.500 7.500" fill="none" stroke="#52b788" strokeWidth="2.200" />
        </App24>
        <App24 label="Task view">
          <rect x="8" y="3" width="14" height="13" rx="1" fill="#f5f5f5" /><rect x="3" y="8" width="13" height="12" rx="1" fill="#9b9b9b" opacity="0.900" />
        </App24>
        <App24 label="File Explorer">
          <path d="M2 4h7l2 2h11v14H2z" fill="#dba01e" /><path d="M2 8h20v12H2z" fill="#fdd04f" /><path d="M6 21v-4q0-1 1-1h10q1 0 1 1v4z" fill="#1d70c4" />
        </App24>
        <App24 label="Task Manager">
          <rect x="2" y="4" width="20" height="16" fill="#a9dff8" /><path d="M2 15l4-6 3 5 3-7 3 3 3-5 4 5v10H2z" fill="#1265ac" /><path d="M2 17l5-4 4 4 5-6 6 6v3H2z" fill="#3492d8" />
        </App24>
        <App24 label="Store">
          <path d="M8 7V3h8v4" fill="none" stroke="#39a2e4" strokeWidth="1.600" /><rect x="3" y="6" width="18" height="16" rx="1.500" fill="#f7f7f7" />
          <path d="M8 10h3.600v3.600H8z" fill="#e9512a" /><path d="M12.400 10H16v3.600h-3.600z" fill="#7fb92b" /><path d="M8 14.400h3.600V18H8z" fill="#22a2e8" /><path d="M12.400 14.400H16V18h-3.600z" fill="#f4b71d" />
        </App24>
        <App24 label="Excel">
          <rect x="6" y="3" width="15" height="18" rx="1.500" fill="#1f8a45" /><path d="M6 3h8v9H6z" fill="#63c552" /><path d="M13 3h8v6h-8z" fill="#a1de77" /><rect x="2" y="11" width="10" height="10" rx="1.200" fill="#0e6a37" />
          <path d="M4.800 13.500l4.400 5M9.200 13.500l-4.400 5" stroke="#fff" strokeWidth="1.500" />
        </App24>
        <App24 label="Telegram" running>
          <circle cx="11" cy="12.500" r="9" fill="#30a1de" /><path d="M5 12.500l11-4.500-2 10-3.500-2.600-1.700 1.600-.3-3z" fill="#fff" />
          <rect x="12.500" y="1" width="11.500" height="10" rx="4" fill="#e04540" /><text x="18.200" y="8.600" textAnchor="middle" fontSize="7.500" fill="#fff">29</text>
        </App24>
        <App24 label="Notepad">
          <rect x="4" y="4" width="16" height="18" rx="1" fill="#63c7e8" /><path d="M6 2v4M9 2v4M12 2v4M15 2v4M18 2v4" stroke="#357d98" strokeWidth="1.300" /><path d="M7 10h10M7 13h10M7 16h10M7 19h6" stroke="#14617e" strokeWidth="1.200" />
        </App24>
        <App24 label="Chrome">
          <circle cx="12" cy="12" r="9.500" fill="#2fa84f" /><path d="M20.200 7.200A9.500 9.500 0 0 1 11.200 21.500L16 14l-1-7z" fill="#fbc616" />
          <path d="M3.800 7.200A9.500 9.500 0 0 1 20.200 7.200H12l-4 4.800z" fill="#e8453c" /><circle cx="12" cy="12" r="4.700" fill="#fff" /><circle cx="12" cy="12" r="3.700" fill="#3c82ee" />
        </App24>
        <App24 label="Edge">
          <defs>
            <linearGradient id="edge" x1="0" y1="0" x2="1" y2="0.400"><stop offset="0" stopColor="#2ba2e8" /><stop offset="1" stopColor="#5fd663" /></linearGradient>
          </defs>
          <circle cx="12" cy="12" r="9.700" fill="#1a78d0" />
          <path d="M2.500 11A9.700 9.700 0 0 1 21.700 12c0 3.200-2.700 4.500-5.500 4.300-2.500 0-2.700-1-2-2 1.200-2 0-4.600-3.500-4.800C7 9.300 3.800 10 2.500 11z" fill="url(#edge)" />
          <path d="M8.500 12c-2 5 2 10 7 9 2.300-.5 4-1.800 5-3.500-4 2-9.500.5-11-3.500z" fill="#0d4f9e" />
          <path d="M10.500 12.200c1.500-2 4.800-.8 3.700 2-.8 1.500 0 2.200 1.800 2.200-2.500 1.200-6.500-1-5.500-4.200z" fill="#241d1a" />
        </App24>
        <App24 label="Brave" running>
          <path d="M12 2.500l5 1 3.500 4-3 11L12 22.500 5.500 18.500 3 7.500 6.500 3.500z" fill="#ef4e25" /><path d="M7 7.500l3 1h3l3-1-1 5-1.500 1 1 3L12 19l-2.700-2.500 1-3L8 12.500z" fill="#fff" /><circle cx="17.500" cy="6" r="6" fill="#5fa878" /><path d="M13 8l9-5M15 11l8-5" stroke="#98cfa8" />
        </App24>
        <App24 label="Recorder">
          <circle cx="12" cy="12" r="9.800" fill="#db2e37" />
          <path d="M20 7.500A8.500 8.500 0 0 0 4 10.500c0 6 6 9 11 8l4-3.500c-3 3-9 2.500-10-2 0-4 4.500-6 7.500-4z" fill="#f6eeee" />
          <path d="M18.500 7.500A7.500 7.500 0 0 0 5.500 11" fill="none" stroke="#db2e37" strokeWidth="2" />
          <circle cx="14" cy="12.500" r="3.800" fill="#db2e37" />
        </App24>
        <App24 label="JF">
          <circle cx="12" cy="12" r="9.800" fill="#d8121b" /><text x="12" y="17" textAnchor="middle" fontSize="14" fontWeight="bold" fontStyle="italic" fill="#fff">JF</text>
        </App24>
        <App24 label="Tree app">
          <circle cx="12" cy="12" r="8" fill="#0c2f3c" stroke="#2f8099" strokeWidth="1.300" /><path d="M12 5v14M9 19v-7l-3 2M15 19v-7l3 2M8 8l4-3 4 3M6 11l6-4 6 4" fill="none" stroke="#3fa3bd" strokeWidth="1.200" />
        </App24>
        <App24 label="VS Code">
          <path d="M16.500 2L22 4.500v15L16.500 22z" fill="#2fa3ea" /><path d="M16.500 2v6L5 17l-2.500-1.800v-1.200zM16.500 22v-6L5 7 2.500 8.800V10z" fill="#1b83d2" />
        </App24>
        <App24 label="Money app">
          <circle cx="12" cy="4.500" r="3" fill="#a8c34d" /><path d="M7.500 12l4.500-6 4.500 6z" fill="#83b750" /><circle cx="5.500" cy="14" r="2.800" fill="#4a9cc0" /><circle cx="18.500" cy="14" r="2.800" fill="#83b750" /><path d="M1.500 21q0-5 4.500-5t6 5z" fill="#3f8fc0" /><path d="M12 21q0-5 5-5t5.500 5z" fill="#5a9e6a" /><circle cx="12" cy="14" r="5" fill="#e2c760" /><text x="12" y="17" textAnchor="middle" fontSize="8" fontWeight="bold" fill="#fff">$</text>
        </App24>
        <App24 label="TradingView" running>
          <rect x="2.500" y="2.500" width="19" height="18" rx="3" fill="#050505" /><path d="M5 8h6.500v7.500H8.500V11H5z" fill="#fff" /><circle cx="13.800" cy="9.500" r="1.600" fill="#fff" /><path d="M16.800 8H20l-3 7.500h-3.200z" fill="#fff" />
        </App24>
        <App24 label="V app">
          <rect x="2.500" y="2.500" width="19" height="19" fill="#fafcfd" /><circle cx="12" cy="12" r="8.500" fill="none" stroke="#8fb8d0" strokeWidth="0.800" /><path d="M7.500 8c2.500-1.500 2.300 5 2 10C13 16 14.500 8 17.500 5" fill="none" stroke="#1d5d8a" strokeWidth="1.400" />
        </App24>
        <App24 label="Charts" active>
          {[[16, 2.5], [10, 8.5], [16, 8.5], [3, 15], [9.5, 15], [16, 15]].map(([x, y]) => (
            <rect key={`${x}-${y}`} x={x} y={y} width="5.600" height="5.400" rx="1" fill="#3f9af0" />
          ))}
        </App24>
      </div>
      <div className="ml-auto flex items-center pr-[15px] font-['Open_Sans','Noto_Sans',sans-serif] text-[9px]">
        <button type="button" aria-label="Show hidden icons"><ChevronUp className="mr-3 size-3" strokeWidth={2.6} /></button>
        <CloudOff className="mr-3.5 size-3.5 text-[#a2a6a7]" />
        <button type="button">ENG</button>
        <button type="button" aria-label="Network, volume and battery" className="ml-3 flex items-center gap-1">
          <Wifi className="size-3.5" />
          <svg viewBox="0 0 16 16" className="size-3.5" fill="none" stroke="#fff" strokeWidth="1.200" aria-hidden="true">
            <path d="M1.500 6h2.500L8 2.500v11L4 10H1.500zM10 6q1.500 2 0 4M12 4q3 4 0 8" /><path d="M14 2.500q3.500 5.500 0 11" opacity="0.500" />
          </svg>
          <svg viewBox="0 0 18 14" className="h-3.5 w-[18px]" aria-hidden="true">
            <rect x="1" y="3" width="14.500" height="9" rx="2.500" fill="#8fd694" stroke="#e8f3e6" /><path d="M16.500 6v3" stroke="#fff" strokeWidth="1.500" /><path d="M8 0v6M5.800 4.500L8 7l2.200-2.500" fill="none" stroke="#17382a" strokeWidth="1.600" />
          </svg>
        </button>
        <time className="ml-3 text-right leading-[13px]" dateTime="2026-01-21T19:20">7:20 PM<br />1/21/2026</time>
      </div>
    </footer>
  );
}

export default function App() {
  return (
    <div className="flex min-h-screen flex-col bg-[#0d151d] font-['Noto_Sans',sans-serif]">
      <main className="grid flex-1 grid-cols-2">
        <TpoWindow />
        <TimeWindow />
      </main>
      <Taskbar />
    </div>
  );
}
